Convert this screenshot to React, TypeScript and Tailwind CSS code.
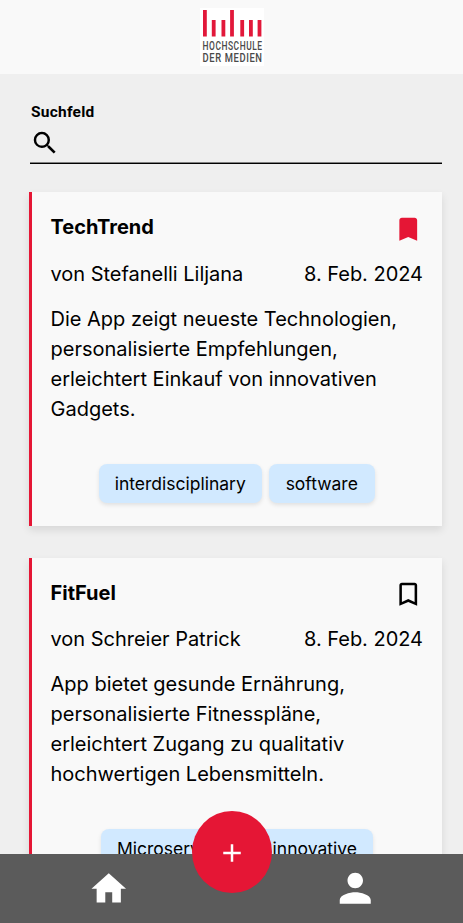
import { MdAdd, MdBookmark, MdBookmarkBorder, MdHome, MdPerson, MdSearch } from 'react-icons/md';
import { clsx } from 'clsx';

type Project = {
  title: string;
  author: string;
  date: string;
  description: string[];
  tags: { label: string; className: string }[];
  bookmarked: boolean;
};

const projects: Project[] = [
  {
    title: 'TechTrend',
    author: 'Stefanelli Liljana',
    date: '8. Feb. 2024',
    description: [
      'Die App zeigt neueste Technologien,',
      'personalisierte Empfehlungen,',
      'erleichtert Einkauf von innovativen',
      'Gadgets.',
    ],
    tags: [
      { label: 'interdisciplinary', className: 'w-[163px]' },
      { label: 'software', className: 'w-[106px]' },
    ],
    bookmarked: true,
  },
  {
    title: 'FitFuel',
    author: 'Schreier Patrick',
    date: '8. Feb. 2024',
    description: [
      'App bietet gesunde Ernährung,',
      'personalisierte Fitnesspläne,',
      'erleichtert Zugang zu qualitativ',
      'hochwertigen Lebensmitteln.',
    ],
    tags: [
      { label: 'Microservices', className: 'w-[149px]' },
      { label: 'innovative', className: 'w-[116px]' },
    ],
    bookmarked: false,
  },
];

const logoBars = [
  { x: 3, y: 2 },
  { x: 11.8, y: 12 },
  { x: 21.5, y: 12 },
  { x: 30.1, y: 2 },
  { x: 40.3, y: 12 },
  { x: 49, y: 12 },
  { x: 57.6, y: 12 },
];

function Logo() {
  return (
    <svg width="64" height="58" viewBox="0 0 64 58" className="overflow-visible bg-white font-[Roboto,sans-serif]">
      {logoBars.map((bar) => (
        <rect key={bar.x} x={bar.x} y={bar.y} width="3.8" height={28.5 - bar.y} fill="#e2183a" />
      ))}
      <g fill="#4a4a4a" fontSize="12.6" fontWeight="500" letterSpacing="0.8">
        <text x="2.6" y="42.3" textLength="60" lengthAdjust="spacingAndGlyphs">HOCHSCHULE</text>
        <text x="2.6" y="54.2" textLength="60" lengthAdjust="spacingAndGlyphs">DER MEDIEN</text>
      </g>
    </svg>
  );
}

function ProjectCard({ project }: { project: Project }) {
  const BookmarkIcon = project.bookmarked ? MdBookmark : MdBookmarkBorder;

  return (
    <article className="h-[333.6px] border-l-3 border-[#e51635] bg-[#f9f9f9] pl-[18.5px] pr-[19px] pt-5 shadow-[0_4px_8px_rgba(0,0,0,0.1)]">
      <div className="flex h-[30px] items-center justify-between">
        <h2 className="text-xl font-bold">{project.title}</h2>
        <BookmarkIcon className="mt-[4px] size-[30.5px]" color={project.bookmarked ? '#e51635' : '#000'} />
      </div>

      <div className="mt-[16.6px] flex justify-between leading-[30px]">
        <span className="tracking-[-0.02px]">von {project.author}</span>
        <span className="tracking-[-0.02px]">{project.date}</span>
      </div>

      <p className="mt-[15.2px] leading-[30px]">
        {project.description.map((line) => (
          <span key={line} className="block whitespace-nowrap">{line}</span>
        ))}
      </p>

      <div className="mt-10 flex justify-center gap-[7px]">
        {project.tags.map((tag) => (
          <span
            key={tag.label}
            className={clsx(
              'flex h-[39px] items-center justify-center rounded-lg bg-[#d1e9ff] pt-[1.4px] text-[17.5px] shadow-[0_2px_4px_rgba(0,0,0,0.1)]',
              tag.className
            )}
          >
            {tag.label}
          </span>
        ))}
      </div>
    </article>
  );
}

function BottomNav() {
  return (
    <nav className="absolute inset-x-0 bottom-0 flex h-[69px] items-center justify-between bg-[#5b5b5b] pl-[88px] pr-[85px] text-white">
      <MdHome className="size-[41.5px]" />
      <MdPerson className="size-[46.5px]" />
      <button className="absolute -top-[43px] left-48 flex h-[82px] w-20 items-center justify-center rounded-[50%] bg-[#e51635]">
        <MdAdd className="mt-px size-[30px]" />
      </button>
    </nav>
  );
}

export default function App() {
  return (
    <div className="relative h-[923px] w-full overflow-hidden bg-[#efefef] font-[Inter,sans-serif] text-xl text-black">
      <header className="flex h-[74px] justify-center bg-[#f9f9f9] pl-px pt-2">
        <Logo />
      </header>

      <div className="ml-[30px] mr-[21px] mt-7 h-[62px] border-b border-black shadow-[inset_0_-1px_0_#808080]">
        <label htmlFor="search" className="block pl-px font-[Roboto,sans-serif] text-[15.5px] font-bold leading-5 tracking-[0.25px]">
          Suchfeld
        </label>
        <div className="mt-[6px] flex items-center">
          <MdSearch className="size-[30px]" />
          <input id="search" type="text" className="h-[30px] flex-1 outline-none" />
        </div>
      </div>

      <main className="ml-[29px] mr-[21px] mt-7 flex flex-col gap-8">
        {projects.map((project) => (
          <ProjectCard key={project.title} project={project} />
        ))}
      </main>

      <BottomNav />
    </div>
  );
}
